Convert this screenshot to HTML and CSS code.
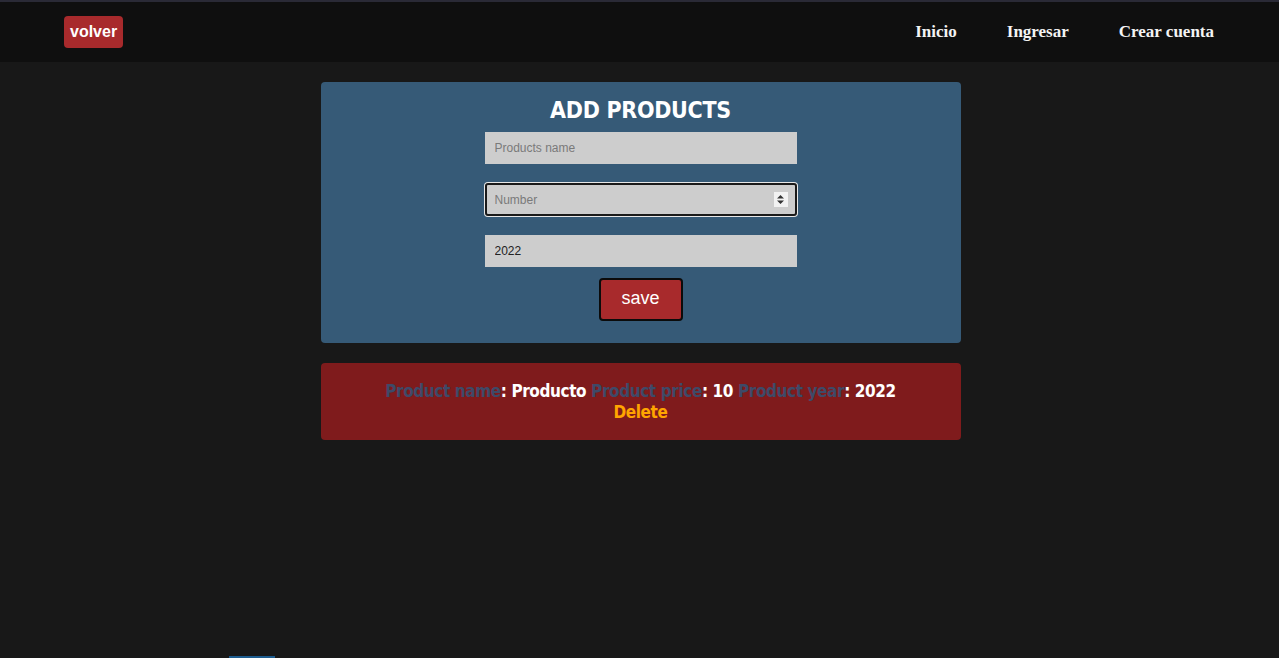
FILE: index.html
```html
<!DOCTYPE html>
<html lang="es">
<head>
<meta charset="utf-8">
<title>Add products</title>
<link rel="stylesheet" href="styles.css">
</head>
<body>
<header class="navbar">
  <a class="back-btn" href="#">volver</a>
  <nav class="nav-links">
    <a href="#">Inicio</a>
    <a href="#">Ingresar</a>
    <a href="#">Crear cuenta</a>
  </nav>
</header>
<main class="main">
  <section class="card form-card">
    <h2 class="title">ADD PRODUCTS</h2>
    <form class="form">
      <input class="field" type="text" placeholder="Products name">
      <div class="field-wrap">
        <input class="field field-focus" type="text" placeholder="Number">
        <span class="spinner"><svg width="9" height="11" viewBox="0 0 9 11"><path d="M4.5 1 L8 4.5 H1 Z M4.5 10 L8 6.5 H1 Z" fill="#333"/></svg></span>
      </div>
      <input class="field" type="text" value="2022">
      <button class="save-btn" type="button">save</button>
    </form>
  </section>
  <section class="card product-card">
    <p class="product-line"><span class="label">Product name</span>: Producto <span class="label">Product price</span>: 10 <span class="label">Product year</span>: 2022</p>
    <a class="delete" href="#">Delete</a>
  </section>
</main>
<div class="scroll-mark"></div>
</body>
</html>
```
FILE: styles.css
```css
html, body {
  margin: 0;
  padding: 0;
  background: #181818;
  height: 100%;
  overflow: hidden;
}
body {
  font-family: "Liberation Sans", Arial, sans-serif;
  position: relative;
}
.navbar {
  box-sizing: border-box;
  height: 62px;
  border-top: 2px solid #2a2a36;
  background: #0f0f0f;
  display: flex;
  align-items: center;
  justify-content: space-between;
  padding: 0 65px 0 64px;
}
.back-btn {
  display: block;
  background: #a82a2c;
  color: #fff;
  font-weight: bold;
  font-size: 16px;
  text-decoration: none;
  border-radius: 4px;
  padding: 6px 6px 7px 6px;
  line-height: 19px;
}
.nav-links {
  display: flex;
  gap: 50px;
}
.nav-links a {
  font-family: "Liberation Serif", "Times New Roman", serif;
  font-weight: bold;
  font-size: 17px;
  color: #f4f4f4;
  text-decoration: none;
}
.main {
  display: flex;
  flex-direction: column;
  align-items: center;
  padding-top: 20px;
  padding-left: 2px;
  gap: 20px;
}
.card {
  width: 640px;
  border-radius: 4px;
  box-sizing: border-box;
}
.form-card {
  background: #365a77;
  padding: 14px 0 22px;
}
.title {
  margin: 0;
  text-align: center;
  color: #fff;
  font-family: "DejaVu Sans Condensed", "Liberation Sans", sans-serif;
  font-weight: bold;
  font-size: 23px;
  line-height: 28px;
  letter-spacing: -0.3px;
}
.form {
  display: flex;
  flex-direction: column;
  align-items: center;
  margin-top: 8px;
}
.field {
  box-sizing: border-box;
  width: 312px;
  height: 32px;
  background: #cdcdcd;
  border: none;
  padding: 0 10px;
  font-family: "Liberation Sans", Arial, sans-serif;
  font-size: 12px;
  color: #222;
  outline: none;
  margin-bottom: 19px;
  display: block;
}
.field::placeholder {
  color: #7a7a7a;
}
.field-wrap {
  position: relative;
  margin-bottom: 19px;
}
.field-focus {
  margin: 0;
  height: 33px;
  border: 2px solid #1a1a1a;
  border-radius: 3px;
  box-shadow: 0 0 0 1px #e8e8e8;
  padding-left: 8px;
}
.spinner {
  position: absolute;
  right: 9px;
  top: 9px;
  width: 14px;
  height: 15px;
  background: #f2f2f2;
  display: flex;
  align-items: center;
  justify-content: center;
}
.save-btn {
  margin-top: -8px;
  width: 84px;
  height: 43px;
  background: #a82a2c;
  color: #fff;
  border: 2px solid #0b0b0b;
  border-radius: 4px;
  font-family: "Liberation Sans", Arial, sans-serif;
  font-size: 18px;
  padding: 0 0 2px;
}
.product-card {
  background: #7f1b1c;
  padding: 18px 0 17px;
  text-align: center;
  font-family: "DejaVu Sans Condensed", "Liberation Sans", sans-serif;
  font-weight: bold;
  font-size: 17px;
  line-height: 21px;
  letter-spacing: -0.4px;
}
.product-line {
  margin: 0;
  color: #fff;
}
.label {
  color: #3e4a68;
}
.delete {
  display: inline-block;
  color: #ffa500;
  text-decoration: none;
}
.scroll-mark {
  position: absolute;
  left: 229px;
  bottom: 0;
  width: 46px;
  height: 2px;
  background: #1d5c8f;
}
```
